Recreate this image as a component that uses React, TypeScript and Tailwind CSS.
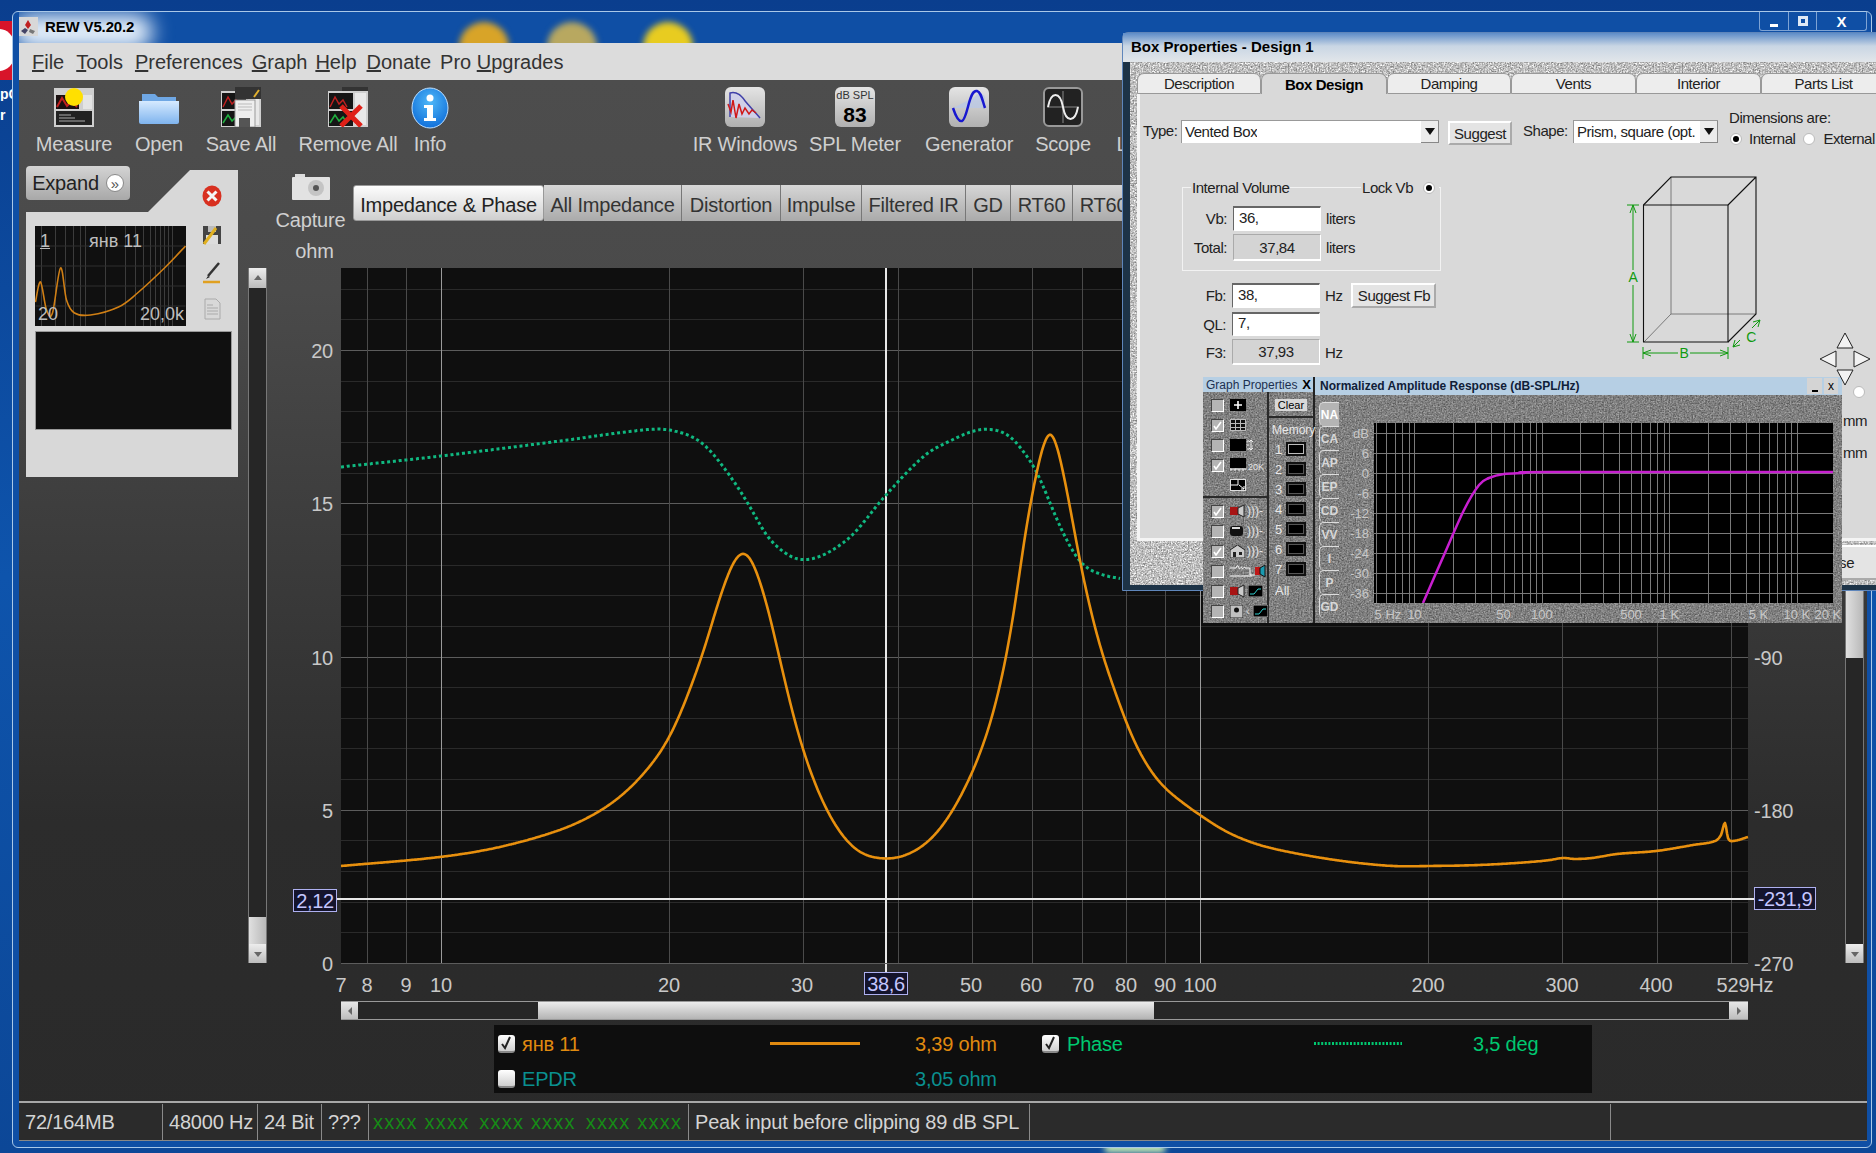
import React from "react";

// plot area of the big impedance graph, in page pixels
const PLOT_X = 341;
const PLOT_Y = 268;
const PLOT_W = 1407;
const PLOT_H = 695;

const freqX = (f: number) => 441 + 759 * Math.log10(f / 10) - PLOT_X;
const ohmY = (v: number) => 963 - v * 30.65 - PLOT_Y;

const smooth = (pts: number[][], ox = 0, oy = 0) => {
  const p = pts.map(([x, y]) => [x - ox, y - oy]);
  let d = `M${p[0][0]} ${p[0][1]}`;
  for (let i = 0; i < p.length - 1; i++) {
    const a = p[Math.max(i - 1, 0)];
    const b = p[i];
    const c = p[i + 1];
    const e = p[Math.min(i + 2, p.length - 1)];
    d += ` C${b[0] + (c[0] - a[0]) / 6} ${b[1] + (c[1] - a[1]) / 6} ${c[0] - (e[0] - b[0]) / 6} ${c[1] - (e[1] - b[1]) / 6} ${c[0]} ${c[1]}`;
  }
  return d;
};

// traced points -> dense trace, blurred so the hand tracing doesn't show as kinks.
// the blur is tighter near the two peaks; anything right of `keepFrom` stays sharp (the spike near 500 Hz)
const traced = (pts: number[][], sigmaAt: (x: number) => number, keepFrom = Infinity) => {
  const ys: number[] = [];
  const x0 = pts[0][0];
  const x1 = pts[pts.length - 1][0];
  let k = 0;
  for (let x = x0; x <= x1; x++) {
    while (k < pts.length - 2 && x > pts[k + 1][0]) k++;
    const a = pts[k];
    const b = pts[k + 1];
    const h = b[0] - a[0];
    const t = (x - a[0]) / h;
    const prev = pts[Math.max(k - 1, 0)];
    const next = pts[Math.min(k + 2, pts.length - 1)];
    const m0 = ((b[1] - prev[1]) / (b[0] - prev[0])) * h;
    const m1 = ((next[1] - a[1]) / (next[0] - a[0])) * h;
    const t2 = t * t;
    const t3 = t2 * t;
    ys.push((2 * t3 - 3 * t2 + 1) * a[1] + (t3 - 2 * t2 + t) * m0 + (-2 * t3 + 3 * t2) * b[1] + (t3 - t2) * m1);
  }
  let d = "";
  ys.forEach((_, i) => {
    const x = x0 + i;
    let y = ys[i];
    if (x < keepFrom) {
      const sigma = sigmaAt(x);
      const r = Math.ceil(sigma * 3);
      let sum = 0;
      let w = 0;
      for (let j = i - r; j <= i + r; j++) {
        // mirror the trace at its ends so the blur can't pull them away
        const q = j < 0 ? 2 * ys[0] - ys[-j] : ys[j] ?? ys[i];
        const g = Math.exp(-((j - i) ** 2) / (2 * sigma * sigma));
        sum += q * g;
        w += g;
      }
      y = sum / w;
    }
    d += `${i ? "L" : "M"}${x - PLOT_X} ${(y - PLOT_Y).toFixed(1)}`;
  });
  return d;
};

const impedanceSigma = (x: number) => 3 + 5 * Math.min(1, Math.min(Math.abs(x - 743), Math.abs(x - 1050)) / 70);

const impedance = [
  [341, 866], [440, 857], [500, 847], [560, 830], [593, 815], [620, 797], [647, 770], [670, 737], [687, 697], [703, 653],
  [720, 597], [733, 563], [743, 553], [753, 563], [767, 605], [780, 660], [793, 715], [807, 763], [823, 803], [840, 833],
  [860, 853], [887, 859], [907, 855], [927, 843], [947, 820], [970, 778], [987, 735], [1000, 687], [1013, 620], [1023, 547],
  [1032, 495], [1042, 449], [1050, 432], [1058, 449], [1070, 507], [1083, 577], [1100, 647], [1117, 697], [1133, 740], [1157, 780],
  [1183, 803], [1200, 815], [1223, 830], [1250, 842], [1279, 850], [1335, 860], [1391, 866], [1428, 866], [1480, 865], [1531, 862],
  [1550, 860], [1563, 858], [1575, 859], [1592, 858], [1617, 854], [1656, 851], [1693, 845], [1715, 841], [1721, 835], [1725, 823],
  [1728, 838], [1733, 841], [1748, 837],
];
const phase = [
  [341, 467], [441, 456], [560, 441], [643, 430], [670, 430], [701, 442], [728, 473], [749, 505], [770, 540], [803, 560],
  [847, 540], [885, 496], [925, 455], [950, 441], [970, 432], [987, 429], [1007, 434], [1020, 447], [1037, 472], [1050, 503],
  [1063, 533], [1080, 562], [1097, 573], [1120, 579],
];
const response = [[1424, 603], [1445, 555], [1465, 510], [1480, 485], [1490, 478], [1505, 474], [1525, 473], [1549, 472], [1834, 472]];
const thumbCurve = [[0, 76], [5, 56], [11, 84], [17, 87], [25, 42], [31, 74], [39, 87], [55, 89], [83, 81], [102, 67], [130, 41], [150, 20]];

const xLabels = [
  ["7", 341], ["8", 367], ["9", 406], ["10", 441], ["20", 669], ["30", 802], ["50", 971], ["60", 1031], ["70", 1083], ["80", 1126],
  ["90", 1165], ["100", 1200], ["200", 1428], ["300", 1562], ["400", 1656], ["529Hz", 1745],
] as [string, number][];

const Grain = ({ className }: { className: string }) => (
  <svg className={`absolute inset-0 w-full h-full ${className}`}>
    <rect width="100%" height="100%" filter="url(#grain)" />
  </svg>
);

const Card = () => (
  <>
    <rect x="0" y="4" width="40" height="36" fill="#cfcfcf" />
    <rect x="1" y="6" width="24" height="16" fill="#151515" />
    <path d="M2 20l5-10 4 7 4-4 4 7" fill="none" stroke="#c02020" strokeWidth="1.5" />
    <rect x="1" y="24" width="24" height="15" fill="#151515" />
    <path d="M2 36l5-8 4 6 4-4 4 6" fill="none" stroke="#20b040" strokeWidth="1.5" />
    <rect x="27" y="6" width="11" height="32" fill="#e8e8e8" />
  </>
);

const MeasureIcon = () => (
  <svg width="40" height="40" viewBox="0 0 40 40">
    <rect y="1" width="40" height="39" fill="#cfcfcf" />
    <rect x="2" y="8" width="23" height="14" fill="#1a1010" />
    <path d="M3 20l5-9 5 8 5-5 5 6" fill="none" stroke="#c02020" strokeWidth="2" />
    <rect x="2" y="24" width="36" height="14" fill="#222" />
    <path d="M5 28h12M5 31h16M5 34h26" stroke="#aaa" />
    <rect x="29" y="8" width="9" height="14" fill="#e4e4e4" />
    <circle cx="20" cy="10" r="9" fill="#ffe000" />
  </svg>
);

const FolderIcon = () => (
  <svg width="40" height="40" viewBox="0 0 40 40">
    <defs>
      <linearGradient id="fold" x1="0" y1="0" x2="0" y2="1">
        <stop offset="0" stopColor="#d6eaff" />
        <stop offset="1" stopColor="#7fb4ee" />
      </linearGradient>
    </defs>
    <path d="M3 7h13l3 3h18v8H3z" fill="#6fa7e4" />
    <path d="M0 14h40v21a2 2 0 0 1-2 2H2a2 2 0 0 1-2-2z" fill="url(#fold)" />
  </svg>
);

const SaveAllIcon = () => (
  <svg width="40" height="40" viewBox="0 0 40 40">
    <Card />
    <path d="M14 0h26v12H14z" fill="#333" />
    <path d="M33 10l5-7" stroke="#e0b030" strokeWidth="2" />
    <rect x="14" y="13" width="20" height="27" fill="#eee" stroke="#999" />
    <path d="M17 17h14M17 20h14M17 23h14" stroke="#bbb" />
    <rect x="18" y="31" width="11" height="9" fill="#555" />
  </svg>
);

const RemoveAllIcon = () => (
  <svg width="40" height="40" viewBox="0 0 40 40">
    <Card />
    <path d="M14 0h26v4H14z" fill="#333" />
    <path d="M13 19l20 20M33 19L13 39" stroke="#e02018" strokeWidth="5" />
  </svg>
);

const InfoIcon = () => (
  <svg width="38" height="42" viewBox="0 0 38 42">
    <defs>
      <radialGradient id="info" cx="0.5" cy="0.35" r="0.7">
        <stop offset="0" stopColor="#4fb8f8" />
        <stop offset="1" stopColor="#0d6bd8" />
      </radialGradient>
    </defs>
    <ellipse cx="19" cy="21" rx="18" ry="20" fill="url(#info)" stroke="#bfe0ff" />
    <circle cx="19" cy="11" r="3.5" fill="#fff" />
    <path d="M13 18h9v13h3v3H13v-3h3v-10h-3z" fill="#fff" />
  </svg>
);

const AppIcon = ({ children, dark }: { children: React.ReactNode; dark?: boolean }) => (
  <div className={`w-[40px] h-[40px] rounded-[6px] relative overflow-hidden ${dark ? "bg-[#222] border-2 border-[#999]" : "bg-[linear-gradient(180deg,#e4e4e4,#b0b0b0)]"}`}>
    {children}
  </div>
);

const IrIcon = () => (
  <AppIcon>
    <svg width="40" height="40" viewBox="0 0 40 40">
      <path d="M5 30V6c8-2 12 4 16 9s9 10 14 16" fill="#d0d0e8" stroke="#4040a8" strokeWidth="1.5" />
      <path d="M3 17l3 8 2-12 3 18 3-14 3 10 3-6 4 6 3-4 4 3" fill="none" stroke="#d01818" strokeWidth="1.5" />
    </svg>
  </AppIcon>
);

const SplIcon = () => (
  <AppIcon>
    <div className="flex flex-col items-center text-[#333] leading-none">
      <span className="text-[11px] mt-[3px]">dB SPL</span>
      <span className="text-[21px] font-bold text-black mt-[3px]">83</span>
    </div>
  </AppIcon>
);

const GeneratorIcon = () => (
  <AppIcon>
    <svg width="40" height="40" viewBox="0 0 40 40">
      <path d="M4 21h32V10c-3-5-7-5-10 0z" fill="#b8c8e8" opacity="0.7" />
      <path d="M4 21c3 9 6 14 9 13s5-11 7-18 4-13 8-12 5 8 8 17" fill="none" stroke="#1818d0" strokeWidth="2.5" />
    </svg>
  </AppIcon>
);

const ScopeIcon = () => (
  <AppIcon dark>
    <svg width="36" height="36" viewBox="0 0 36 36">
      <path d="M18 2v32M2 18h32" stroke="#888" />
      <path d="M3 18c3-16 12-16 15 0s12 16 15 0" fill="none" stroke="#eee" strokeWidth="2" />
    </svg>
  </AppIcon>
);

const CameraIcon = () => (
  <svg width="38" height="26" viewBox="0 0 38 26">
    <rect x="3" y="0" width="10" height="4" fill="#ddd" />
    <rect y="3" width="38" height="23" rx="1" fill="#e2e2e2" />
    <circle cx="24" cy="14" r="8" fill="#c4c4c4" />
    <circle cx="24" cy="14" r="3" fill="#555" />
  </svg>
);

const CloseBadge = () => (
  <svg width="20" height="22" viewBox="0 0 20 22">
    <ellipse cx="10" cy="11" rx="9.5" ry="10.5" fill="#d83020" />
    <path d="M5.5 6.5l9 9M14.5 6.5l-9 9" stroke="#f4f4f4" strokeWidth="3" />
  </svg>
);

const FloppyBadge = () => (
  <svg width="20" height="20" viewBox="0 0 20 20">
    <path d="M1 1h18v18H1z" fill="#444" />
    <path d="M4 10h12v9H4z" fill="#ddd" />
    <path d="M6 1h8v6H6z" fill="#bbb" />
    <path d="M2 19L14 3" stroke="#e0b020" strokeWidth="3" />
  </svg>
);

const PenBadge = () => (
  <svg width="20" height="24" viewBox="0 0 20 24">
    <path d="M6 15L17 2" stroke="#333" strokeWidth="2.5" />
    <path d="M4 18l2-3 2 1z" fill="#222" />
    <path d="M1 21h17" stroke="#e0a020" strokeWidth="2.5" />
  </svg>
);

const DocBadge = () => (
  <svg width="17" height="22" viewBox="0 0 17 22">
    <path d="M1 1h11l4 4v16H1z" fill="#d8d8d8" stroke="#aaa" />
    <path d="M3 7h6M3 10h11M3 13h11M3 16h11" stroke="#aaa" />
  </svg>
);

const tools = [
  { label: "Measure", w: "w-[100px]", icon: <MeasureIcon /> },
  { label: "Open", w: "w-[70px]", icon: <FolderIcon /> },
  { label: "Save All", w: "w-[94px]", icon: <SaveAllIcon /> },
  { label: "Remove All", w: "w-[120px]", icon: <RemoveAllIcon /> },
  { label: "Info", w: "w-[44px]", icon: <InfoIcon /> },
  { label: "IR Windows", w: "w-[110px] ml-[238px]", icon: <IrIcon /> },
  { label: "SPL Meter", w: "w-[110px]", icon: <SplIcon /> },
  { label: "Generator", w: "w-[118px]", icon: <GeneratorIcon /> },
  { label: "Scope", w: "w-[70px]", icon: <ScopeIcon /> },
  { label: "Limits", w: "w-[52px] ml-[18px]", icon: null },
];

const graphTabs = [
  { label: "Impedance & Phase", w: "w-[191px]", on: true },
  { label: "All Impedance", w: "w-[138px]" },
  { label: "Distortion", w: "w-[99px]" },
  { label: "Impulse", w: "w-[81px]" },
  { label: "Filtered IR", w: "w-[104px]" },
  { label: "GD", w: "w-[45px]" },
  { label: "RT60", w: "w-[62px]" },
  { label: "RT60", w: "w-[62px]" },
];

const Thumb = () => (
  <div className="relative w-[151px] h-[100px] bg-[#101010] overflow-hidden text-[18px] leading-none text-[#bdbdbd]">
    <svg className="absolute inset-0" width="151" height="100" viewBox="0 0 150 100">
      {[6, 20, 30, 38, 45, 50, 70, 90, 100, 108, 115, 120, 125, 129, 133, 137].map((x) => (
        <path key={x} d={`M${x} 0v100`} stroke="#3c3c3c" />
      ))}
      {[20, 40, 60, 80].map((y) => (
        <path key={y} d={`M0 ${y}h150`} stroke="#2e2e2e" />
      ))}
      <path d={smooth(thumbCurve)} fill="none" stroke="#d07f14" strokeWidth="1.6" />
    </svg>
    <span className="absolute left-[5px] top-[6px] underline">1</span>
    <span className="absolute left-[54px] top-[6px]">янв 11</span>
    <span className="absolute left-[3px] bottom-[3px]">20</span>
    <span className="absolute right-[2px] bottom-[3px]">20,0k</span>
  </div>
);

const ScrollArrow = ({ dir }: { dir: "up" | "down" | "left" | "right" }) => {
  const d = { up: "M1 7l4-5 4 5z", down: "M1 3l4 5 4-5z", left: "M7 1L3 5l4 4z", right: "M3 1l4 4-4 4z" }[dir];
  return (
    <svg width="10" height="10" viewBox="0 0 10 10">
      <path d={d} fill="#666" />
    </svg>
  );
};

const VScroll = ({ thumbTop, thumbH }: { thumbTop: string; thumbH: string }) => (
  <div className="w-[19px] h-[695px] flex flex-col bg-[#262626] border-x border-[#777]">
    <div className="h-[20px] flex-none bg-[linear-gradient(180deg,#ededed,#bcbcbc)] flex items-center justify-center">
      <ScrollArrow dir="up" />
    </div>
    <div className="flex-1 relative">
      <div className={`absolute left-0 right-0 bg-[linear-gradient(90deg,#e0e0e0,#b8b8b8)] ${thumbTop} ${thumbH}`} />
    </div>
    <div className="h-[19px] flex-none bg-[linear-gradient(180deg,#ededed,#bcbcbc)] flex items-center justify-center">
      <ScrollArrow dir="down" />
    </div>
  </div>
);

const Tag = ({ className, children }: { className: string; children: React.ReactNode }) => (
  <div className={`absolute h-[23px] flex items-center justify-center bg-[#14142c] border border-[#aeb0f0] text-[#c4c6ff] text-[20px] leading-none tracking-[-0.02em] ${className}`}>
    {children}
  </div>
);

const Plot = () => {
  const majors = [10, 100];
  const minors = [8, 9, 20, 30, 40, 50, 60, 70, 80, 90, 200, 300, 400, 500];
  const rows = Array.from({ length: 23 }, (_, i) => i);
  return (
    <div className="relative w-[1407px] h-[695px] bg-[#0f0f0f] text-[#c8c8c8] text-[20px] leading-none tracking-[-0.01em]">
      <svg className="absolute inset-0 overflow-visible" width={PLOT_W} height={PLOT_H}>
        <g shapeRendering="crispEdges">
          {rows.map((v) => (
            <path key={v} d={`M0 ${Math.round(ohmY(v)) + 0.5}H${PLOT_W}`} stroke={v % 5 === 0 ? "#5c5c5c" : "#2a2a2a"} />
          ))}
          {minors.map((f) => (
            <path key={f} d={`M${Math.round(freqX(f)) + 0.5} 0V${PLOT_H}`} stroke="#4a4a4a" />
          ))}
          {majors.map((f) => (
            <path key={f} d={`M${Math.round(freqX(f)) + 0.5} 0V${PLOT_H}`} stroke="#9a9a9a" />
          ))}
          <path d={`M545 0V${PLOT_H}`} stroke="#e8e8e8" strokeWidth="2" />
        </g>
        <path d={traced(phase, () => 5)} fill="none" stroke="#10b880" strokeWidth="3" strokeDasharray="3 2.8" />
        <path d={traced(impedance, impedanceSigma, 1540)} fill="none" stroke="#e8900e" strokeWidth="2.6" strokeLinejoin="round" />
        <path d="M-4 631H1413" stroke="#e8e8e8" strokeWidth="2" shapeRendering="crispEdges" />
      </svg>
      {[20, 15, 10, 5, 0].map((v) => (
        <span key={v} className="absolute right-[1415px] -translate-y-1/2" style={{ top: ohmY(v) + 1 }}>
          {v}
        </span>
      ))}
      {[[-90, ohmY(10)], [-180, ohmY(5)], [-270, ohmY(0)]].map(([v, y]) => (
        <span key={v} className="absolute -translate-y-1/2" style={{ top: y + 1, left: PLOT_W + 6 }}>
          {v}
        </span>
      ))}
      <Tag className="left-[-48px] top-[621px] w-[44px]">2,12</Tag>
      <Tag className="left-[1413px] top-[619px] w-[62px]">-231,9</Tag>
    </div>
  );
};

const Check = ({ on }: { on?: boolean }) => (
  <div className="w-[17px] h-[18px] flex-none rounded-[3px] bg-[linear-gradient(180deg,#fff,#cfcfcf)] border-b-2 border-[#888] flex items-center justify-center">
    {on && (
      <svg width="13" height="14" viewBox="0 0 13 14">
        <path d="M2 8l3 4 5-11" fill="none" stroke="#222" strokeWidth="2" />
      </svg>
    )}
  </div>
);

const Legend = () => (
  <div className="ml-[246px] mt-[5px] w-[1098px] h-[68px] bg-[#0e0e0e] relative text-[20px] leading-none tracking-[-0.01em]">
    <div className="h-[35px] flex items-center pt-[2px]">
      <div className="ml-[4px]"><Check on /></div>
      <span className="ml-[7px] w-[248px] text-[#e08a10]">янв 11</span>
      <div className="w-[90px] h-[3px] bg-[#e08a10]" />
      <span className="ml-[55px] w-[127px] text-[#e08a10]">3,39 ohm</span>
      <Check on />
      <span className="ml-[8px] w-[247px] text-[#00c870]">Phase</span>
      <svg width="88" height="3" className="flex-none">
        <path d="M0 1.5H88" stroke="#00c870" strokeWidth="3" strokeDasharray="2 1.6" />
      </svg>
      <span className="ml-[71px] text-[#00c870]">3,5 deg</span>
    </div>
    <div className="h-[34px] flex items-center mt-[2px]">
      <div className="ml-[4px]"><Check /></div>
      <span className="ml-[7px] w-[393px] text-[#0a9090]">EPDR</span>
      <span className="text-[#0a9090]">3,05 ohm</span>
    </div>
  </div>
);

const HScroll = () => (
  <div className="ml-[93px] w-[1407px] h-[19px] flex border-y border-[#999]">
    <div className="w-[17px] bg-[linear-gradient(180deg,#e8e8e8,#bdbdbd)] flex items-center justify-center"><ScrollArrow dir="left" /></div>
    <div className="w-[180px] bg-[#262626]" />
    <div className="w-[616px] bg-[linear-gradient(180deg,#ececec,#b4b4b4)]" />
    <div className="w-[575px] bg-[#262626]" />
    <div className="w-[19px] bg-[linear-gradient(180deg,#e8e8e8,#bdbdbd)] flex items-center justify-center"><ScrollArrow dir="right" /></div>
  </div>
);

const status = [
  { w: "w-[144px]", t: "72/164MB" },
  { w: "w-[95px]", t: "48000 Hz" },
  { w: "w-[64px]", t: "24 Bit" },
  { w: "w-[47px]", t: "???" },
];

const StatusBar = () => (
  <div className="h-[40px] flex-none flex bg-[#2b2b2b] border-t-2 border-[#a8a8a8] border-b border-b-[#888] text-[20px] text-[#d4d4d4] leading-none tracking-[-0.01em] pt-[1px]">
    {status.map((s) => (
      <div key={s.t} className={`${s.w} flex items-center pl-[6px] border-r border-[#8a8a8a]`}>{s.t}</div>
    ))}
    <div className="w-[320px] flex items-center pl-[4px] border-r border-[#8a8a8a] text-[#168a16] gap-[10px] overflow-hidden tracking-[1.2px]">
      <span>xxxx xxxx</span><span>xxxx xxxx</span><span>xxxx xxxx</span>
    </div>
    <div className="w-[341px] flex items-center pl-[6px] border-r border-[#8a8a8a]">Peak input before clipping 89 dB SPL</div>
    <div className="w-[581px] border-r border-[#8a8a8a]" />
  </div>
);

const Field = ({ label, value, unit, edit }: { label: string; value: string; unit: string; edit?: boolean }) => (
  <div className="flex items-center h-full">
    <span className="w-[44px] text-right">{label}</span>
    <div
      className={`ml-[6px] w-[88px] h-full flex items-center ${
        edit
          ? "bg-white border-t-2 border-l border-[#666] border-b border-r border-b-white border-r-white pl-[5px] pb-[4px]"
          : "bg-[#d4d4d4] border-t border-l border-[#aaa] border-b-2 border-r border-b-white border-r-white justify-center"
      }`}
    >
      {value}
    </div>
    <span className="ml-[5px]">{unit}</span>
  </div>
);

const Radio = ({ on }: { on?: boolean }) => (
  <div className="w-[12px] h-[12px] rounded-full bg-white border border-[#bbb] flex items-center justify-center flex-none">
    {on && <div className="w-[6px] h-[6px] rounded-full bg-black" />}
  </div>
);

const Select = ({ w, text }: { w: string; text: string }) => (
  <div className={`${w} h-[23px] bg-white border-t border-l border-[#999] flex items-center justify-between pl-[3px] mt-[10px] flex-none`}>
    <span className="truncate pb-[2px]">{text}</span>
    <div className="w-[18px] h-full flex-none flex items-center justify-center bg-[#ececec] border-b border-r border-[#888]">
      <svg width="10" height="7" viewBox="0 0 10 7"><path d="M0 0h10L5 7z" fill="#111" /></svg>
    </div>
  </div>
);

const PushButton = ({ w, text, className = "" }: { w: string; text: string; className?: string }) => (
  <div className={`${w} flex-none flex items-center justify-center bg-[#e4e4e4] border-2 border-t-white border-l-white border-r-[#aaa] border-b-[#aaa] ${className}`}>
    {text}
  </div>
);

const BoxDrawing = () => (
  <svg width="150" height="195" viewBox="1625 170 150 195" className="flex-none ml-[184px]">
    <g fill="none" stroke="#7a7a7a">
      <path d="M1671 177V314H1756M1671 314L1644 342" />
    </g>
    <g fill="none" stroke="#111" strokeWidth="1.1">
      <path d="M1643.5 205H1728V342H1643.5z" />
      <path d="M1643.5 205L1671 177H1756V314L1728 342M1728 205L1756 177" />
    </g>
    <g fill="none" stroke="#109a10">
      <path d="M1633 205V270M1633 285V342M1627 205h12M1627 342h12M1633 205l-3 8M1633 205l3 8M1633 342l-3-8M1633 342l3-8" />
      <path d="M1643 353H1678M1690 353H1728M1643 347v12M1728 347v12M1643 353l8-3M1643 353l8 3M1728 353l-8-3M1728 353l-8 3" />
      <path d="M1733 347l7-7M1752 328l8-8M1733 347l2-7M1733 347l7-2M1760 320l-2 7M1760 320l-7 2" />
    </g>
    <g fill="#109a10" fontSize="14" textAnchor="middle">
      <text x="1633" y="282">A</text>
      <text x="1684" y="358">B</text>
      <text x="1751" y="342">C</text>
    </g>
  </svg>
);

const NavArrows = () => (
  <svg width="52" height="54" viewBox="0 0 52 54" className="absolute left-[1819px] top-[332px] overflow-visible">
    <g fill="#f2f2f2" stroke="#222">
      <path d="M26 1l8 15H18z" />
      <path d="M26 53l-8-15h16z" />
      <path d="M1 27l16-8v16z" />
      <path d="M51 27l-16-8v16z" />
    </g>
  </svg>
);

const dialogTabs = [
  ["Description", "w-[124px]"],
  ["Box Design", "w-[126px]"],
  ["Damping", "w-[124px]"],
  ["Vents", "w-[125px]"],
  ["Interior", "w-[125px]"],
  ["Parts List", "w-[125px]"],
];

const BoxDialog = () => (
  <div className="absolute left-[1122px] top-[32px] w-[760px] h-[559px] rounded-t-[6px] border border-[#5f86bb] bg-[#1d3347] flex flex-col text-[15px] leading-none tracking-[-0.03em] text-[#222]">
    <div className="h-[29px] flex-none flex items-center pl-[8px] pb-[2px] font-bold text-[15px] tracking-normal text-black bg-[linear-gradient(180deg,#5d8cc8,#c9d6e4_45%,#e2e6ea)]">Box Properties - Design 1</div>
    <div className="relative flex-1 ml-[7px] mb-[5px] bg-white pl-[7px] pt-[11px] flex flex-col">
      <Grain className="opacity-50" />
      <div className="relative flex h-[21px] flex-none">
        {dialogTabs.map(([t, w], i) => (
          <div
            key={t}
            className={`${w} flex-none flex items-center justify-center rounded-t-[7px] border-t border-x border-[#999] ${
              i === 1 ? "bg-[#d9d9d9] font-bold text-black" : "bg-[#ededed] border-b"
            }`}
          >
            {t}
          </div>
        ))}
      </div>
      <div className="relative h-[447px] flex-none bg-[#d9d9d9] border-l-[3px] border-b-[3px] border-[#f4f4f4] flex flex-col">
        <div className="flex pl-[3px] pt-[16px] h-[62px] flex-none">
          <span className="w-[38px] mt-[13px]">Type:</span>
          <Select w="w-[258px]" text="Vented Box" />
          <PushButton w="w-[64px]" text="Suggest" className="h-[24px] mt-[11px] ml-[9px]" />
          <span className="w-[50px] ml-[11px] mt-[13px]">Shape:</span>
          <Select w="w-[145px]" text="Prism, square (opt." />
          <div className="ml-[11px] flex flex-col flex-none">
            <span className="h-[16px]">Dimensions are:</span>
            <div className="flex items-center mt-[5px]">
              <span className="ml-[1px]"><Radio on /></span>
              <span className="ml-[7px]">Internal</span>
              <span className="ml-[8px]"><Radio /></span>
              <span className="ml-[8px]">External</span>
            </div>
          </div>
        </div>
        <div className="flex pt-[14px] pl-[42px]">
          <div className="w-[259px] flex-none pt-[17px]">
            <div className="relative h-[84px] border border-[#f2f2f2]">
              <span className="absolute left-[8px] -top-[8px] bg-[#d9d9d9] px-[1px]">Internal Volume</span>
              <span className="absolute left-[178px] -top-[8px] bg-[#d9d9d9] pl-[1px] pr-[4px] flex items-center gap-[10px]">Lock Vb <Radio on /></span>
              <div className="h-[25px] mt-[18px]"><Field label="Vb:" value="36," unit="liters" edit /></div>
              <div className="h-[27px] mt-[3px]"><Field label="Total:" value="37,84" unit="liters" /></div>
            </div>
            <div className="h-[25px] mt-[12px] flex items-center">
              <Field label="Fb:" value="38," unit="Hz" edit />
              <PushButton w="w-[85px]" text="Suggest Fb" className="h-[25px] ml-[9px]" />
            </div>
            <div className="h-[24px] mt-[4px]"><Field label="QL:" value="7," unit="" edit /></div>
            <div className="h-[26px] mt-[3px]"><Field label="F3:" value="37,93" unit="Hz" /></div>
          </div>
          <BoxDrawing />
        </div>
        <span className="absolute left-[703px] top-[319px]">mm</span>
        <span className="absolute left-[703px] top-[351px]">mm</span>
        <div className="absolute left-[713px] top-[292px]"><Radio /></div>
      </div>
      <div className="relative flex-1 flex justify-end pt-[4px]">
        <PushButton w="w-[90px]" text="Close" className="h-[35px]" />
      </div>
    </div>
  </div>
);

const GpCheck = ({ on }: { on?: boolean }) => (
  <div className="w-[13px] h-[13px] flex-none bg-[#b4b4b4] border-t border-l border-[#444] border-b border-r border-b-white border-r-white flex items-center justify-center">
    {on && (
      <svg width="9" height="9" viewBox="0 0 9 9"><path d="M1 5l2 3 5-7" fill="none" stroke="#fff" strokeWidth="1.6" /></svg>
    )}
  </div>
);

const gpIcon = {
  plus: (
    <svg width="16" height="12" viewBox="0 0 16 12"><rect width="16" height="12" fill="#000" /><path d="M8 2v8M4 6h8" stroke="#fff" strokeWidth="1.6" /></svg>
  ),
  grid: (
    <svg width="16" height="12" viewBox="0 0 16 12"><rect x="0.5" y="0.5" width="15" height="11" fill="#111" stroke="#bbb" /><path d="M5.5 0v12M10.5 0v12M0 4.5h16M0 8.5h16" stroke="#bbb" /></svg>
  ),
  vert: (
    <svg width="26" height="12" viewBox="0 0 26 12"><rect width="16" height="12" fill="#000" /><path d="M21 1v10M19 3l2-2 2 2M19 9l2 2 2-2M18 1v2M18 5v2M18 9v2" fill="none" stroke="#eee" /></svg>
  ),
  ticks: (
    <svg width="16" height="14" viewBox="0 0 16 14"><rect width="16" height="10" fill="#000" /><path d="M1 13v-2M5 13v-2M9 13v-2M13 13v-2M0 11h16" stroke="#eee" /></svg>
  ),
  zoom: (
    <svg width="16" height="12" viewBox="0 0 16 12"><rect width="16" height="12" fill="#000" /><path d="M0 6h8V0M9 6l5 4M14 10h-3M14 10V7" fill="none" stroke="#fff" /><path d="M0 .5h16M.5 0v12M0 11.5h16M15.5 0v12" stroke="#ddd" /></svg>
  ),
  speaker: (
    <svg width="15" height="14" viewBox="0 0 15 14"><rect y="3" width="8" height="8" fill="#a81414" /><path d="M8 4l6-3v12l-6-3z" fill="#ccc" stroke="#222" /></svg>
  ),
  port: (
    <svg width="15" height="12" viewBox="0 0 15 12"><rect y="1" width="13" height="10" rx="3" fill="#111" /><path d="M2 3h8" stroke="#ddd" strokeWidth="2" /></svg>
  ),
  house: (
    <svg width="15" height="13" viewBox="0 0 15 13"><path d="M7.5 0L15 5v8H0V5z" fill="#ccc" stroke="#222" /><path d="M3 7h3v5H3zM9 7h3v3H9z" fill="#222" /></svg>
  ),
  circuit: (
    <svg width="36" height="14" viewBox="0 0 36 14"><path d="M0 4h6c1-3 2-3 3 0s2-3 3 0 2-3 3 0h5v7h5M0 12h22" fill="none" stroke="#fff" /><rect x="25" y="3" width="5" height="8" fill="#c01818" /><path d="M30 4l5-3v12l-5-3z" fill="#1a9ab0" stroke="#111" /></svg>
  ),
  resp: (
    <svg width="15" height="12" viewBox="0 0 15 12"><rect width="15" height="12" fill="#000" stroke="#aaa" /><path d="M2 9h4l4-5h3" fill="none" stroke="#30d0d0" /></svg>
  ),
  mic: (
    <svg width="13" height="13" viewBox="0 0 13 13"><rect width="13" height="13" fill="#c0c0c0" stroke="#222" /><circle cx="6.5" cy="5" r="2.5" fill="#111" /></svg>
  ),
};

const Waves = () => <span className="text-[#e4e4e4] text-[12px] leading-none whitespace-nowrap">)))-</span>;

const gpRows: { on?: boolean; noBox?: boolean; body: React.ReactNode }[] = [
  { body: gpIcon.plus },
  { on: true, body: gpIcon.grid },
  { body: gpIcon.vert },
  { on: true, body: <div className="flex items-end gap-[2px]">{gpIcon.ticks}<span className="text-[9px] text-[#e4e4e4] leading-none">20K</span></div> },
  { noBox: true, body: gpIcon.zoom },
];
const gpRows2: { on?: boolean; body: React.ReactNode }[] = [
  { on: true, body: <div className="flex items-center gap-[2px]">{gpIcon.speaker}<Waves /></div> },
  { body: <div className="flex items-center gap-[2px]">{gpIcon.port}<Waves /></div> },
  { on: true, body: <div className="flex items-center gap-[2px]">{gpIcon.house}<Waves /></div> },
  { body: gpIcon.circuit },
  { body: <div className="flex items-center gap-[3px]">{gpIcon.speaker}{gpIcon.resp}</div> },
  { body: <div className="flex items-center gap-[3px]">{gpIcon.mic}<span className="text-[#ddd] text-[11px]">‹</span>{gpIcon.resp}</div> },
];

const GraphProperties = () => (
  <div className="relative w-[112px] h-full flex-none bg-[#808080] flex flex-col border-r-2 border-[#222]">
    <Grain className="opacity-30" />
    <div className="relative h-[15px] flex-none bg-[#b6cfe4] flex items-center justify-between pl-[3px] pr-[2px] text-[#1c3050] text-[12px] leading-none">
      <span className="whitespace-nowrap">Graph Properties</span>
      <span className="font-bold text-[13px] text-black">X</span>
    </div>
    <div className="relative flex-1 flex">
      <div className="w-[66px] flex-none border-r-2 border-[#2a2a2a] pt-[3px]">
        {gpRows.map((r, i) => (
          <div key={i} className="h-[20px] flex items-center gap-[6px] pl-[8px]">
            {r.noBox ? <div className="w-[13px]" /> : <GpCheck on={r.on} />}
            {r.body}
          </div>
        ))}
        <div className="h-[3px] border-b-2 border-[#2a2a2a] mb-[3px]" />
        {gpRows2.map((r, i) => (
          <div key={i} className="h-[20px] flex items-center gap-[6px] pl-[8px]">
            <GpCheck on={r.on} />
            {r.body}
          </div>
        ))}
      </div>
      <div className="flex-1 flex flex-col text-[#e8e8e8] text-[13px] leading-none">
        <div className="h-[26px] flex-none border-b-2 border-[#2a2a2a] pt-[7px] pl-[6px]">
          <div className="w-[32px] h-[12px] bg-[#d8d8d8] text-black text-[11px] flex items-center justify-center">Clear</div>
        </div>
        <span className="text-[12px] pl-[3px] mt-[6px] h-[15px] whitespace-nowrap overflow-hidden">Memory</span>
        {[1, 2, 3, 4, 5, 6, 7].map((n) => (
          <div key={n} className="h-[20px] flex items-center pl-[6px] gap-[5px]">
            <span className="w-[6px]">{n}</span>
            <div className={`w-[20px] h-[14px] border-[2px] border-[#111] bg-black outline outline-1 -outline-offset-3 ${n === 1 ? "outline-[#bbb]" : "outline-[#555]"}`} />
          </div>
        ))}
        <span className="pl-[6px] mt-[5px]">All</span>
      </div>
    </div>
  </div>
);

const sideTabs = ["NA", "CA", "AP", "EP", "CD", "VV", "I", "P", "GD"];
const dbLabels = ["dB", "6", "0", "-6", "-12", "-18", "-24", "-30", "-36"];
const respX = (f: number) => 2 + 127.5 * Math.log10(f / 5);
const respGrid = [5, 6, 7, 8, 9, 10, 20, 30, 40, 50, 60, 70, 80, 90, 100, 200, 300, 400, 500, 600, 700, 800, 900, 1000, 2000, 3000, 4000, 5000, 6000, 7000, 8000, 9000, 10000, 20000];
const respTicks: [string, number][] = [["5 Hz", 6.2], ["10", 10], ["50", 50], ["100", 100], ["500", 500], ["1 K", 1000], ["5 K", 5000], ["10 K", 10000], ["20 K", 17500]];

const NormalizedWindow = () => (
  <div className="relative flex-1 h-full bg-[#808080] flex flex-col">
    <Grain className="opacity-30" />
    <div className="relative h-[18px] flex-none bg-[#b6cfe4] flex items-center pl-[5px] text-[12px] font-bold text-[#102038] leading-none">
      <span className="flex-1">Normalized Amplitude Response (dB-SPL/Hz)</span>
      <div className="w-[15px] h-[16px] bg-[#d4d4d4] mr-[2px] flex items-end justify-center pb-[2px]"><div className="w-[6px] h-[2px] bg-black" /></div>
      <div className="w-[14px] h-[16px] bg-[#d4d4d4] mr-[4px] flex items-center justify-center text-black font-normal">x</div>
    </div>
    <div className="relative flex-1 flex">
      <div className="ml-[4px] w-[20px] flex-none pt-[7px] flex flex-col">
        {sideTabs.map((t, i) => (
          <div
            key={t}
            className={`h-[24px] flex items-center justify-center rounded-l-[5px] border-l border-t border-[#ddd] text-[12px] font-bold leading-none ${i === 0 ? "bg-[#b4b4b4] text-white" : "text-[#d8d8d8]"}`}
          >
            {t}
          </div>
        ))}
      </div>
      <div className="w-[30px] flex-none pt-[28px] flex flex-col items-end text-[13px] text-[#c8c8c8] leading-none">
        {dbLabels.map((d) => (
          <div key={d} className="h-[20px] flex items-center">{d}</div>
        ))}
      </div>
      <div className="ml-[5px] pt-[28px] relative">
        <svg width="459" height="180" className="bg-black block" shapeRendering="crispEdges">
          {respGrid.map((f) => (
            <path key={f} d={`M${Math.round(respX(f)) + 0.5} 0V180`} stroke="#7a7a7a" />
          ))}
          {[10, 30, 50, 70, 90, 110, 130, 150, 170].map((y) => (
            <path key={y} d={`M0 ${y + 0.5}H459`} stroke="#7a7a7a" />
          ))}
          <path d={smooth(response, 1375, 423)} fill="none" stroke="#c81fd0" strokeWidth="2.5" shapeRendering="auto" />
        </svg>
        <div className="relative h-[20px] text-[13px] text-[#c8c8c8] leading-none">
          {respTicks.map(([t, f]) => (
            <span key={t} className="absolute top-[5px] -translate-x-1/2 whitespace-nowrap" style={{ left: respX(f) }}>{t}</span>
          ))}
        </div>
      </div>
    </div>
  </div>
);

const WindowButtons = () => (
  <div className="flex h-[19px] border border-t-0 border-[#7ea3d4] rounded-b-[3px] text-white flex-none">
    <div className="w-[29px] flex items-end justify-center pb-[3px] border-r border-[#7ea3d4]"><div className="w-[8px] h-[3px] bg-white" /></div>
    <div className="w-[28px] flex items-center justify-center border-r border-[#7ea3d4]"><div className="w-[10px] h-[10px] border-[3px] border-[#dfe9f5]" /></div>
    <div className="w-[49px] flex items-center justify-center font-bold text-[15px] leading-none">X</div>
  </div>
);

export default function App() {
  return (
    <div className="relative w-[1876px] h-[1153px] overflow-hidden bg-[linear-gradient(180deg,#0a3e8e,#0e54ac_50%,#0c4797)] font-['Liberation_Sans',Arial,sans-serif]">
      <svg className="absolute size-0">
        <filter id="grain" x="0" y="0" width="100%" height="100%" colorInterpolationFilters="sRGB">
          <feTurbulence type="fractalNoise" baseFrequency="0.65" numOctaves="2" seed="3" />
          <feColorMatrix values="1.2 1.2 0 0 -0.7  1.2 1.2 0 0 -0.7  1.2 1.2 0 0 -0.7  0 0 0 0 1" />
        </filter>
      </svg>

      {/* desktop behind the windows */}
      <div className="absolute left-0 top-[21px] w-[20px] h-[59px] bg-[#d8142a] overflow-hidden">
        <div className="w-[30px] h-[42px] rounded-full bg-white -ml-[16px] mt-[8px]" />
      </div>
      <span className="absolute left-0 top-[87px] w-[12px] overflow-hidden text-[14px] font-bold text-white leading-none">pC</span>
      <span className="absolute left-0 top-[108px] text-[14px] font-bold text-white leading-none">r</span>
      <div className="absolute left-[1105px] top-[1141px] w-[60px] h-[12px] bg-[#bfe3b0] blur-[3px]" />

      {/* main window */}
      <div className="absolute left-[12px] top-[11px] w-[1860px] h-[1137px] rounded-[6px] border border-[#a9c8e8] bg-[#0f4fa5] pl-[6px] pr-[4px] pb-[6px] flex flex-col">
        <div className="relative h-[31px] flex-none flex items-start justify-between overflow-hidden">
          <div className="absolute left-[-6px] top-[2px] w-[140px] h-[36px] rounded-full bg-[#e6f0fa] blur-[10px]" />
          <div className="absolute left-[440px] top-[10px] w-[50px] h-[50px] rounded-full bg-[#d8a428] blur-[3px]" />
          <div className="absolute left-[528px] top-[10px] w-[50px] h-[50px] rounded-full bg-[#b8a860] blur-[3px]" />
          <div className="absolute left-[624px] top-[10px] w-[50px] h-[50px] rounded-full bg-[#e8cc20] blur-[3px]" />
          <div className="relative flex items-center gap-[7px] h-full pb-[2px]">
            <svg width="19" height="19" viewBox="0 0 19 19">
              <rect width="19" height="19" fill="#d8d8d8" />
              <path d="M9 3l3 5-3 4-3-4z" fill="#c02020" />
              <path d="M2 14l4-3 3 2-3 4z" fill="#446" />
              <path d="M11 12l5 2-2 3-4-2z" fill="#777" />
            </svg>
            <span className="text-[15px] font-bold text-black leading-none tracking-[-0.01em]">REW V5.20.2</span>
          </div>
          <div className="relative"><WindowButtons /></div>
        </div>

        <div className="h-[37px] flex-none bg-[#dcdcdc] flex items-center text-[20px] text-[#333] leading-none pt-[1px]">
          <span className="ml-[13px]"><u>F</u>ile</span>
          <span className="ml-[12px]"><u>T</u>ools</span>
          <span className="ml-[12px]"><u>P</u>references</span>
          <span className="ml-[9px]"><u>G</u>raph</span>
          <span className="ml-[8px]"><u>H</u>elp</span>
          <span className="ml-[10px]"><u>D</u>onate</span>
          <span className="ml-[9px]">Pro <u>U</u>pgrades</span>
        </div>

        <div className="flex-1 flex flex-col bg-[linear-gradient(180deg,#4d4d4d,#4a4a4a_20%,#2c2c2c_70%,#2a2a2a)] min-h-0">
          <div className="h-[86px] flex-none flex pl-[5px] pt-[7px] overflow-hidden">
            {tools.map((t) => (
              <div key={t.label} className={`${t.w} flex-none flex flex-col items-center`}>
                <div className="h-[40px]">{t.icon}</div>
                <span className="mt-[7px] text-[20px] leading-none text-[#cfcfcf] whitespace-nowrap tracking-[-0.01em]">{t.label}</span>
              </div>
            ))}
          </div>

          <div className="flex-1 flex min-h-0">
            <div className="w-[229px] flex-none pl-[7px] pt-[4px]">
              <div className="relative w-[212px] h-[307px]">
                <div className="absolute inset-0 bg-[#d8d8d8] [clip-path:polygon(0_42px,122px_42px,164px_0,212px_0,212px_307px,0_307px)]" />
                <div className="absolute left-0 -top-[4px] w-[104px] h-[34px] rounded-[4px] bg-[linear-gradient(180deg,#d4d4d4,#a8a8a8)] flex items-center justify-center gap-[7px] text-[20px] text-[#222] leading-none tracking-[-0.01em]">
                  Expand
                  <div className="w-[18px] h-[18px] rounded-full bg-white border border-[#888] text-[15px] flex items-center justify-center text-[#555]">»</div>
                </div>
                <div className="relative pt-[56px] pl-[9px]">
                  <div className="flex">
                    <Thumb />
                    <div className="ml-[16px] w-[20px] flex flex-col items-center -mt-[41px]">
                      <CloseBadge />
                      <div className="mt-[18px]"><FloppyBadge /></div>
                      <div className="mt-[16px]"><PenBadge /></div>
                      <div className="mt-[13px]"><DocBadge /></div>
                    </div>
                  </div>
                  <div className="w-[197px] h-[99px] mt-[5px] bg-[#101010] border border-[#999]" />
                </div>
              </div>
            </div>

            <div className="flex-1 flex flex-col min-w-0">
              <div className="h-[102px] flex-none flex">
                <div className="w-[105px] flex-none flex flex-col items-center pl-[20px] pt-[8px] text-[20px] text-[#d0d0d0] leading-none tracking-[-0.01em]">
                  <CameraIcon />
                  <span className="mt-[10px]">Capture</span>
                  <span className="mt-[11px] ml-[8px]">ohm</span>
                </div>
                <div className="flex h-[36px] mt-[19px] flex-none">
                  {graphTabs.map((t, i) => (
                    <div
                      key={i}
                      className={`${t.w} flex-none flex items-center justify-center text-[20px] leading-none whitespace-nowrap pt-[3px] tracking-[-0.01em] border-r border-[#777] ${
                        t.on ? "bg-[linear-gradient(180deg,#fdfdfd,#cfcfcf)] border border-[#999] rounded-[3px] text-[#222]" : "bg-[linear-gradient(180deg,#d6d6d6,#aaaaaa)] text-[#333]"
                      }`}
                    >
                      {t.label}
                    </div>
                  ))}
                </div>
              </div>

              <div className="h-[696px] flex-none flex">
                <VScroll thumbTop="bottom-0" thumbH="h-[27px]" />
                <div className="ml-[74px]"><Plot /></div>
                <div className="ml-[97px]"><VScroll thumbTop="top-[298px]" thumbH="h-[72px]" /></div>
              </div>

              <div className="relative h-[37px] flex-none ml-[93px] w-[1407px] text-[20px] text-[#c8c8c8] leading-none tracking-[-0.01em]">
                {xLabels.map(([t, x]) => (
                  <span key={t} className="absolute top-[11px] -translate-x-1/2 whitespace-nowrap" style={{ left: x - PLOT_X }}>{t}</span>
                ))}
                <Tag className="left-[523px] top-[8px] w-[44px]">38,6</Tag>
                <div className="absolute left-[544px] top-0 w-[2px] h-[8px] bg-[#e8e8e8]" />
              </div>

              <HScroll />
              <Legend />
            </div>
          </div>

          <StatusBar />
        </div>
      </div>

      <BoxDialog />

      {/* graph properties + response graph float over everything */}
      <div className="absolute left-[1203px] top-[377px] w-[639px] h-[246px] flex">
        <GraphProperties />
        <NormalizedWindow />
      </div>
      <NavArrows />
    </div>
  );
}
